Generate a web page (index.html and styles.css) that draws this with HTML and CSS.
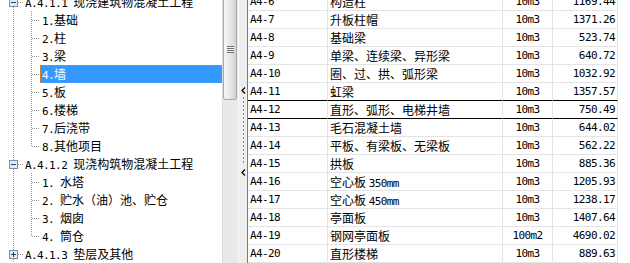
FILE: index.html
```html
<!DOCTYPE html>
<html lang="zh-CN">
<head>
<meta charset="utf-8">
<title>定额库</title>
<link rel="stylesheet" href="styles.css">
</head>
<body>
<div class="app">
  <div class="tree-pane">
    <ul class="tree">
      <li class="node">
        <div class="row">
          <svg class="tog" width="9" height="9" viewBox="0 0 9 9"><rect x="0.5" y="0.5" width="8" height="8" fill="#e3e9f1" stroke="#7b8fa8"/><path d="M2 4.5h5" stroke="#1f3f7a"/></svg>
          <span class="lbl"><span class="mono">A.4.1.1 </span>现浇建筑物混凝土工程</span>
        </div>
        <ul class="kids">
          <li class="leaf"><span class="lbl"><span class="mono">1.</span>基础</span></li>
          <li class="leaf"><span class="lbl"><span class="mono">2.</span>柱</span></li>
          <li class="leaf"><span class="lbl"><span class="mono">3.</span>梁</span></li>
          <li class="leaf sel"><span class="lbl"><span class="mono">4.</span>墙</span></li>
          <li class="leaf"><span class="lbl"><span class="mono">5.</span>板</span></li>
          <li class="leaf"><span class="lbl"><span class="mono">6.</span>楼梯</span></li>
          <li class="leaf"><span class="lbl"><span class="mono">7.</span>后浇带</span></li>
          <li class="leaf"><span class="lbl"><span class="mono">8.</span>其他项目</span></li>
        </ul>
      </li>
      <li class="node">
        <div class="row">
          <svg class="tog" width="9" height="9" viewBox="0 0 9 9"><rect x="0.5" y="0.5" width="8" height="8" fill="#e3e9f1" stroke="#7b8fa8"/><path d="M2 4.5h5" stroke="#1f3f7a"/></svg>
          <span class="lbl"><span class="mono">A.4.1.2 </span>现浇构筑物混凝土工程</span>
        </div>
        <ul class="kids">
          <li class="leaf"><span class="lbl"><span class="mono">1. </span>水塔</span></li>
          <li class="leaf"><span class="lbl"><span class="mono">2. </span>贮水（油）池、贮仓</span></li>
          <li class="leaf"><span class="lbl"><span class="mono">3. </span>烟囱</span></li>
          <li class="leaf"><span class="lbl"><span class="mono">4. </span>筒仓</span></li>
        </ul>
      </li>
      <li class="node">
        <div class="row">
          <svg class="tog" width="9" height="9" viewBox="0 0 9 9"><rect x="0.5" y="0.5" width="8" height="8" fill="#e3e9f1" stroke="#7b8fa8"/><path d="M2 4.5h5M4.5 2v5" stroke="#1f3f7a"/></svg>
          <span class="lbl"><span class="mono">A.4.1.3 </span>垫层及其他</span>
        </div>
      </li>
    </ul>
  </div>

  <div class="vscroll">
    <div class="thumb"><span class="grip"></span></div>
  </div>

  <div class="splitter">
    <svg class="arrow" width="5" height="7" viewBox="0 0 5 7"><path d="M4 0.5L1 3.5L4 6.5" fill="none" stroke="#000" stroke-width="1.2"/></svg>
    <span class="dots"></span>
    <svg class="arrow" width="5" height="7" viewBox="0 0 5 7"><path d="M4 0.5L1 3.5L4 6.5" fill="none" stroke="#000" stroke-width="1.2"/></svg>
  </div>

  <div class="grid-pane">
    <table class="grid">
      <colgroup><col class="c-code"><col class="c-name"><col class="c-unit"><col class="c-price"></colgroup>
      <tbody>
        <tr><td class="code">A4-6</td><td class="name">构造柱</td><td class="unit">10m3</td><td class="price">1169.44</td></tr>
        <tr><td class="code">A4-7</td><td class="name">升板柱帽</td><td class="unit">10m3</td><td class="price">1371.26</td></tr>
        <tr><td class="code">A4-8</td><td class="name">基础梁</td><td class="unit">10m3</td><td class="price">523.74</td></tr>
        <tr><td class="code">A4-9</td><td class="name">单梁、连续梁、异形梁</td><td class="unit">10m3</td><td class="price">640.72</td></tr>
        <tr><td class="code">A4-10</td><td class="name">圈、过、拱、弧形梁</td><td class="unit">10m3</td><td class="price">1032.92</td></tr>
        <tr><td class="code">A4-11</td><td class="name">虹梁</td><td class="unit">10m3</td><td class="price">1357.57</td></tr>
        <tr class="sel"><td class="code">A4-12</td><td class="name">直形、弧形、电梯井墙</td><td class="unit">10m3</td><td class="price">750.49</td></tr>
        <tr><td class="code">A4-13</td><td class="name">毛石混凝土墙</td><td class="unit">10m3</td><td class="price">644.02</td></tr>
        <tr><td class="code">A4-14</td><td class="name">平板、有梁板、无梁板</td><td class="unit">10m3</td><td class="price">562.22</td></tr>
        <tr><td class="code">A4-15</td><td class="name">拱板</td><td class="unit">10m3</td><td class="price">885.36</td></tr>
        <tr><td class="code">A4-16</td><td class="name">空心板 <span class="mono">350mm</span></td><td class="unit">10m3</td><td class="price">1205.93</td></tr>
        <tr><td class="code">A4-17</td><td class="name">空心板 <span class="mono">450mm</span></td><td class="unit">10m3</td><td class="price">1238.17</td></tr>
        <tr><td class="code">A4-18</td><td class="name">亭面板</td><td class="unit">10m3</td><td class="price">1407.64</td></tr>
        <tr><td class="code">A4-19</td><td class="name">钢网亭面板</td><td class="unit">100m2</td><td class="price">4690.02</td></tr>
        <tr><td class="code">A4-20</td><td class="name">直形楼梯</td><td class="unit">10m3</td><td class="price">889.63</td></tr>
      </tbody>
    </table>
  </div>
</div>
</body>
</html>
```

FILE: styles.css
```css
html, body {
  margin: 0;
  padding: 0;
  background: #fff;
}

body {
  font-family: "Noto Sans CJK SC", "Noto Sans", sans-serif;
  font-size: 12px;
  color: #000;
}

.mono {
  font-family: "DejaVu Sans Mono", "Liberation Mono", monospace;
  font-size: 11px;
  line-height: 1;
  letter-spacing: -0.6px;
  white-space: pre;
}

.app {
  display: flex;
  width: 630px;
  height: 263px;
  overflow: hidden;
}

/* ---------- tree ---------- */
.tree-pane {
  width: 222px;
  flex: none;
  height: 263px;
  overflow: hidden;
  background: #fff;
}

.tree,
.kids {
  list-style: none;
  margin: 0;
  padding: 0;
}

.tree {
  margin-top: -7px;
  background-image: repeating-linear-gradient(to bottom, #9a9a9a 0 1px, transparent 1px 2px);
  background-size: 1px 100%;
  background-position: 13px 0;
  background-repeat: no-repeat;
}

.row {
  display: flex;
  align-items: center;
  height: 18px;
  padding-left: 9px;
  background-image: repeating-linear-gradient(to right, #9a9a9a 0 1px, transparent 1px 2px);
  background-size: 6px 1px;
  background-position: 18px 9px;
  background-repeat: no-repeat;
}

.tog {
  flex: none;
  display: block;
}

.row .lbl {
  margin-left: 7px;
  line-height: 18px;
  white-space: nowrap;
}

.kids {
  background-image: repeating-linear-gradient(to bottom, #9a9a9a 0 1px, transparent 1px 2px);
  background-size: 1px calc(100% - 9px);
  background-position: 31px 0;
  background-repeat: no-repeat;
}

.leaf {
  height: 18px;
  background-image: repeating-linear-gradient(to right, #9a9a9a 0 1px, transparent 1px 2px);
  background-size: 8px 1px;
  background-position: 32px 9px;
  background-repeat: no-repeat;
}

.leaf .lbl {
  display: block;
  margin-left: 40px;
  padding-left: 2px;
  height: 18px;
  line-height: 18px;
  white-space: nowrap;
  box-sizing: border-box;
}

.leaf.sel .lbl {
  background: #3399ff;
  color: #fff;
  outline: 1px dotted #d9822b;
  outline-offset: -1px;
}

/* ---------- scrollbar ---------- */
.vscroll {
  width: 16px;
  flex: none;
  background: #e9e9e9;
  border-left: 1px solid #dcdcdc;
  box-sizing: border-box;
}

.thumb {
  height: 100px;
  margin: 0 1px 0 0;
  border: 1px solid #a9a9a9;
  border-top: none;
  border-radius: 0 0 3px 3px;
  background: linear-gradient(to right, #f7f7f7, #e6e6e6 55%, #d2d2d2);
  box-sizing: border-box;
  display: flex;
  align-items: center;
  justify-content: center;
}

.grip {
  width: 7px;
  height: 7px;
  background: repeating-linear-gradient(to bottom, #6e6e6e 0 1px, #f4f4f4 1px 2px);
}

/* ---------- splitter ---------- */
.splitter {
  width: 9px;
  flex: none;
  background: #eeeeee;
  border-left: 1px solid #fafafa;
  box-sizing: border-box;
  display: flex;
  flex-direction: column;
  align-items: center;
  padding-top: 87px;
}

.arrow {
  display: block;
  flex: none;
}

.dots {
  width: 1px;
  height: 68px;
  margin: 3px 0 4px;
  background: repeating-linear-gradient(to bottom, #4f8fdc 0 2px, transparent 2px 4px);
}

/* ---------- grid ---------- */
.grid-pane {
  flex: 1;
  height: 263px;
  overflow: hidden;
  border-left: 1px solid #7c7c7c;
  background: #fff;
}

.grid {
  border-collapse: separate;
  border-spacing: 0;
  table-layout: fixed;
  width: 370px;
  margin-top: -8px;
}

.c-code { width: 80px; }
.c-name { width: 175px; }
.c-unit { width: 50px; }
.c-price { width: 65px; }

.grid td {
  height: 18px;
  box-sizing: border-box;
  padding: 0 2px;
  border-top: 1px solid #e4e4e4;
  border-right: 1px solid #e4e4e4;
  line-height: 17px;
  white-space: nowrap;
  overflow: hidden;
}

.grid tr:last-child td {
  border-bottom: 1px solid #e4e4e4;
}

.grid tr.sel td,
.grid tr.sel + tr td {
  border-top-color: #000;
}

.code,
.unit,
.price {
  font-family: "DejaVu Sans Mono", "Liberation Mono", monospace;
  font-size: 11px;
  letter-spacing: -0.6px;
}

.unit {
  text-align: center;
}

.price {
  text-align: right;
}
```
